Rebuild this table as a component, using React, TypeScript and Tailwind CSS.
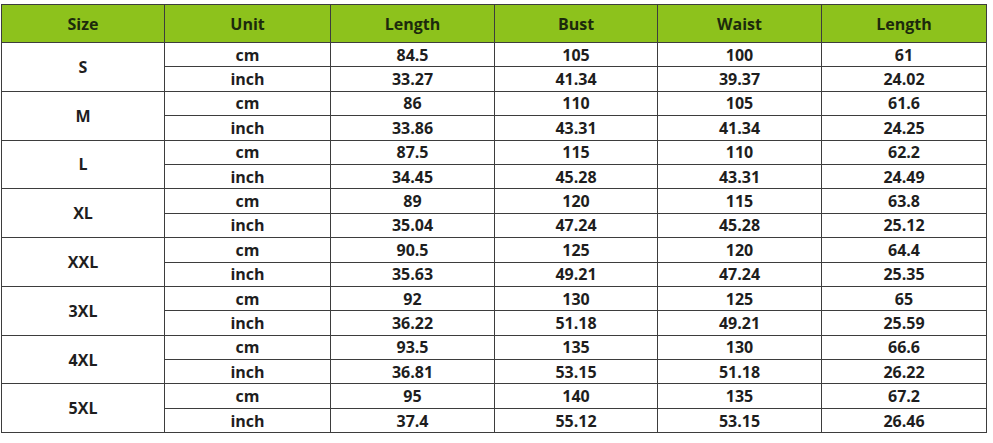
import React from "react";

const data: [string, string[], string[]][] = [
  ["S", ["84.5", "105", "100", "61"], ["33.27", "41.34", "39.37", "24.02"]],
  ["M", ["86", "110", "105", "61.6"], ["33.86", "43.31", "41.34", "24.25"]],
  ["L", ["87.5", "115", "110", "62.2"], ["34.45", "45.28", "43.31", "24.49"]],
  ["XL", ["89", "120", "115", "63.8"], ["35.04", "47.24", "45.28", "25.12"]],
  ["XXL", ["90.5", "125", "120", "64.4"], ["35.63", "49.21", "47.24", "25.35"]],
  ["3XL", ["92", "130", "125", "65"], ["36.22", "51.18", "49.21", "25.59"]],
  ["4XL", ["93.5", "135", "130", "66.6"], ["36.81", "53.15", "51.18", "26.22"]],
  ["5XL", ["95", "140", "135", "67.2"], ["37.4", "55.12", "53.15", "26.46"]],
];

const cell = "border-[1.5px] border-[#3d3d3d] text-center align-middle p-0 leading-none";

export default function App() {
  return (
    <div className="w-[993px] h-[443px] bg-white pt-[4px] pl-[1px]" style={{ fontFamily: '"Open Sans", "Liberation Sans", sans-serif' }}>
      <table className="table-fixed border-collapse w-[985px] text-[16px] font-bold text-[#1e1e1e]">
        <colgroup>
          <col className="w-[163px]" />
          <col className="w-[166px]" />
          <col className="w-[164px]" />
          <col className="w-[163px]" />
          <col className="w-[164px]" />
          <col className="w-[165px]" />
        </colgroup>
        <thead>
          <tr className="h-[38px] bg-[#8dc21c] text-[#1c2a0c]">
            {["Size", "Unit", "Length", "Bust", "Waist", "Length"].map((h, i) => (
              <th key={i} className={cell + " font-bold"}>{h}</th>
            ))}
          </tr>
        </thead>
        <tbody>
          {data.map(([size, cm, inch]) => (
            <React.Fragment key={size}>
              <tr className="h-[24.4px]">
                <td rowSpan={2} className={cell}>{size}</td>
                <td className={cell}>cm</td>
                {cm.map((v, i) => (
                  <td key={i} className={cell}>{v}</td>
                ))}
              </tr>
              <tr className="h-[24.4px]">
                <td className={cell}>inch</td>
                {inch.map((v, i) => (
                  <td key={i} className={cell}>{v}</td>
                ))}
              </tr>
            </React.Fragment>
          ))}
        </tbody>
      </table>
    </div>
  );
}
